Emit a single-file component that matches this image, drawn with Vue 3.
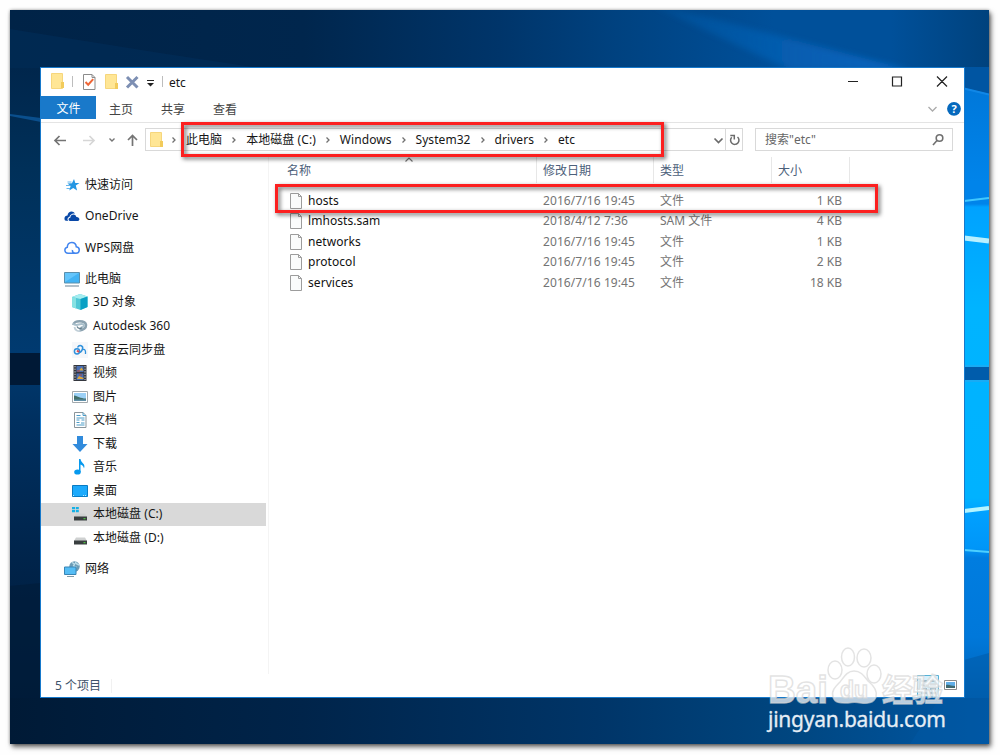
<template>
  <div class="desktop">
    <svg class="wallpaper" viewBox="0 0 979 734" preserveAspectRatio="none" aria-hidden="true">
      <defs>
        <linearGradient id="top" x1="0" x2="1" y1="0" y2="0">
          <stop offset="0" stop-color="#002347" />
          <stop offset="0.3" stop-color="#00264d" />
          <stop offset="0.5" stop-color="#00356a" />
          <stop offset="0.62" stop-color="#004280" />
          <stop offset="0.78" stop-color="#00509a" />
          <stop offset="0.9" stop-color="#00509a" />
          <stop offset="1" stop-color="#00427d" />
        </linearGradient>
        <linearGradient id="beam" x1="0" x2="1" y1="0" y2="0">
          <stop offset="0" stop-color="#0a64b8" stop-opacity="0.3" />
          <stop offset="1" stop-color="#0a6ccb" />
        </linearGradient>
        <linearGradient id="bottom" x1="0" x2="1" y1="0" y2="0">
          <stop offset="0" stop-color="#001a36" />
          <stop offset="0.3" stop-color="#00244a" />
          <stop offset="0.6" stop-color="#003568" />
          <stop offset="0.8" stop-color="#004680" />
          <stop offset="1" stop-color="#0058a6" />
        </linearGradient>
        <linearGradient id="left" x1="0" x2="0" y1="0" y2="1">
          <stop offset="0" stop-color="#00264c" />
          <stop offset="0.16" stop-color="#003059" />
          <stop offset="0.45" stop-color="#003a70" />
          <stop offset="0.56" stop-color="#003060" />
          <stop offset="0.8" stop-color="#002349" />
          <stop offset="1" stop-color="#001a36" />
        </linearGradient>
        <linearGradient id="right" x1="0" x2="0" y1="0" y2="1">
          <stop offset="0" stop-color="#0075d6" />
          <stop offset="0.18" stop-color="#0084ea" />
          <stop offset="0.215" stop-color="#0084ea" />
          <stop offset="0.22" stop-color="#00a2ff" />
          <stop offset="0.38" stop-color="#00b4ff" />
          <stop offset="0.68" stop-color="#00b2ff" />
          <stop offset="0.705" stop-color="#00a0ff" />
          <stop offset="0.76" stop-color="#0096f8" />
          <stop offset="0.775" stop-color="#007de0" />
          <stop offset="0.9" stop-color="#0078da" />
          <stop offset="1" stop-color="#0062b4" />
        </linearGradient>
        <filter id="soft" x="-10%" y="-40%" width="120%" height="180%">
          <feGaussianBlur stdDeviation="3" />
        </filter>
      </defs>
      <rect width="979" height="734" fill="#003060" />
      <rect width="979" height="60" fill="url(#top)" />
      <path d="M640 -6 L700 8 L900 60 L780 60 Z" fill="url(#beam)" opacity="0.8" filter="url(#soft)" />
      <path d="M0 19 L150 43 L250 58 L0 58 Z" fill="#003362" opacity="0.4" />
      <rect y="58" width="31" height="630" fill="url(#left)" />
      <path d="M0 104 L31 108 L31 112 L0 106 Z" fill="#0a4f8d" />
      <rect y="343" width="31" height="32" fill="#001936" />
      <path d="M0 576 L31 573 L31 688 L0 688 Z" fill="#001c3b" opacity="0.7" />
      <rect x="954" y="58" width="25" height="632" fill="url(#right)" />
      <path d="M954 57 L979 57 L979 84 L954 78 Z" fill="#0055a2" />
      <path d="M954 78.500 L979 84.500" stroke="#1087e6" stroke-width="2" />
      <path d="M954 191 L979 188" stroke="#40c8ff" stroke-width="2" />
      <path d="M954 228 L979 231" stroke="#b9f0ff" stroke-width="5" />
      <rect x="954" y="357" width="25" height="13" fill="#005cab" />
      <path d="M954 356 H979 M954 371 H979" stroke="#30a4ea" />
      <path d="M954 501 L979 498" stroke="#b4f4ff" stroke-width="4" />
      <path d="M954 540 L979 542" stroke="#4ccfff" stroke-width="2" />
      <rect y="688" width="979" height="46" fill="url(#bottom)" />
      <path d="M954 650 L979 643 V734 H900 Z" fill="#0058a4" opacity="0.5" />
    </svg>

    <main class="window">
      <header class="titlebar">
        <svg class="quick" viewBox="0 0 150 28" aria-hidden="true">
          <g fill="#ffe695" stroke="#f6d67c">
            <path d="M10.500 5.500h11v15h-11z" />
            <path d="M64.500 6.500h11v14h-11z" />
          </g>
          <path d="M20 14h3v6h-3zM74 15h3v6h-3z" fill="#f2cb5b" />
          <path d="M31.500 8v11M121.500 8v11" stroke="#bdbdbd" />
          <path d="M42.500 6.500h8.500l3 3v12h-11.500z" fill="#fff" stroke="#8b8b8b" />
          <path d="M51 6.500v3h3" fill="none" stroke="#8b8b8b" />
          <path d="M44.500 14l2.700 2.700 5-5.500" fill="none" stroke="#ee6636" stroke-width="2" />
          <path d="M86 9l10.500 10.500M96.500 9l-10.500 10.500" stroke="#7d8fb3" stroke-width="3" />
          <path d="M106 12.500h7" stroke="#222" />
          <path d="M106 15h7l-3.500 3.500z" fill="#222" />
        </svg>
        <span class="title">etc</span>
        <svg class="controls" viewBox="0 0 125 28" fill="none" stroke="#222" stroke-width="1.200">
          <path d="M8 13.500h10M52.500 9h9v9h-9zM97 8.500l10 10M107 8.500l-10 10" />
        </svg>
      </header>

      <nav class="tabs">
        <span class="tab active">文件</span>
        <span v-for="tab in tabs" :key="tab" class="tab">{{ tab }}</span>
        <svg class="help" viewBox="0 0 40 22">
          <path d="M7.500 11l4 4 4-4" fill="none" stroke="#aaa" stroke-width="1.300" />
          <circle cx="33" cy="12.800" r="6.900" fill="#0669bd" />
          <text x="33" y="16.800" text-anchor="middle">?</text>
        </svg>
      </nav>

      <div class="toolbar">
        <svg class="history" viewBox="0 0 104 34" fill="none" stroke="#747474" stroke-width="1.700">
          <path d="M25 17.500H14M18.500 13L14 17.500l4.500 4.500" />
          <path d="M42 17.500h11M48.500 13l4.500 4.500-4.500 4.500" stroke="#d6d6d6" />
          <path d="M68.500 15.500l2.500 2.500 2.500-2.500" stroke-width="1.400" />
          <path d="M91.500 23V12.500M87 17l4.500-4.500L96 17" />
        </svg>
        <div class="address">
          <svg class="crumb-folder" viewBox="0 0 40 22">
            <path d="M4.500 3.500h11v14h-11z" fill="#ffe695" stroke="#f6d67c" />
            <path d="M14 12h3v6h-3z" fill="#f2cb5b" />
            <path d="M26.500 8.500l2.500 2.500-2.500 2.500" fill="none" stroke="#707070" stroke-width="1.300" />
          </svg>
          <template v-for="(crumb, i) in crumbs" :key="crumb">
            <svg v-if="i" class="separator" viewBox="0 0 24 22">
              <path d="M10.500 8.500l2.500 2.500-2.500 2.500" fill="none" stroke="#707070" stroke-width="1.300" />
            </svg>
            <span class="crumb">{{ crumb }}</span>
          </template>
          <svg class="refresh" viewBox="0 0 32 22" fill="none" stroke="#6b6b6b">
            <path d="M4.500 9.500l4 4 4-4" stroke-width="1.700" />
            <path d="M15.500 0v22" stroke="#d9d9d9" />
            <path d="M21.700 8.300a4.200 4.200 0 1 0 5.800-.3M20.300 6.500h4v4" stroke-width="1.500" />
          </svg>
        </div>
        <div class="search">
          <span>搜索"etc"</span>
          <svg viewBox="0 0 14 14" fill="none" stroke="#707070" stroke-width="1.600">
            <circle cx="8.500" cy="5" r="3.300" />
            <path d="M6 7.500L2 12" />
          </svg>
        </div>
      </div>

      <div class="content">
        <aside class="sidebar">
          <div
            v-for="item in places"
            :key="item.name"
            class="place"
            :class="{ nested: item.nested, grouped: item.grouped, selected: item.selected }"
          >
            <svg class="place-icon" viewBox="0 0 16 16" aria-hidden="true">
              <g v-if="item.icon === 'star'">
                <path d="M10 2l1.300 4h4.200l-3.700 2.600 1.300 5-3.900-2.700-3.900 2.700 1.300-4.700L3.500 6.500l4.400-.3z" fill="#2496e3" />
                <path d="M3.500 5h4M2 8.500h4M2.500 11.500h3.500" stroke="#68b7ec" />
              </g>
              <g v-else-if="item.icon === 'onedrive'">
                <path d="M1 12.500c-1.500-3 .3-5 2.500-5C4 3 9 2 11 5.500 7 5 5.500 8 5.500 9 3.500 9.500 3 11 4 13z" fill="#0948a7" />
                <path d="M6 13c-2.200-.4-1.700-3.300.3-3.300C6.500 6.500 11 5 12.400 9c3-.2 4.100 3.300 1.600 4z" fill="#0948a7" />
              </g>
              <g v-else-if="item.icon === 'wps'" fill="none" stroke="#4285ef" stroke-width="1.500">
                <path d="M10.500 13.200H4C.2 13.200-.2 8 3.300 7.300 3.500 1 11.700 1 12.300 6.800c4.400.9 3.500 6.400-.3 6.400-3 0-3.800-1.500-3.500-3.200" />
              </g>
              <g v-else-if="item.icon === 'computer'">
                <path d="M.5 1.500h15v10.500H.5z" fill="#42b3f4" stroke="#5a8fac" />
                <path d="M1 2h14L1 11z" fill="#7bd1ff" opacity=".6" />
                <path d="M1 15h14" stroke="#8198a7" stroke-width="1.200" />
              </g>
              <g v-else-if="item.icon === 'cube'">
                <path d="M0 3l8-3 7.500 2.500v10.500L8.500 16 0 13z" fill="#4fc8d5" />
                <path d="M0 3l8-3 7.500 2.500-7 2.500z" fill="#a5edf0" />
                <path d="M8.500 5l7-2.500v10.500l-7 3z" fill="#0aa0c4" />
                <path d="M0 3l4 1v10.500L0 13z" fill="#86e2e3" />
              </g>
              <g v-else-if="item.icon === 'autodesk'" fill="none">
                <path d="M1.500 7c0-5 12-5 12.500 0 .2 3-3 5-6.500 5.500" stroke="#8ba2b0" stroke-width="2.600" />
                <path d="M1 5.500c3 4 7-1 10.500 1 1.500 1.500-1.500 3.500-3 2.500" stroke="#a9bfcb" stroke-width="2" />
                <path d="M2.500 9c.5 3.500 3.500 4.500 6 4" stroke="#c0cfd8" stroke-width="1.800" />
                <path d="M5 8.500c1 2 3 2.300 5 1.300" stroke="#637d8c" stroke-width="1.300" />
              </g>
              <g v-else-if="item.icon === 'baidu'" fill="none">
                <path d="M0 0h16v16H0z" fill="#f5f7fa" />
                <circle cx="5" cy="9.300" r="2.600" stroke="#2f91dc" stroke-width="1.500" />
                <path d="M5.500 5.500c2-3.500 6-1.500 5 1.500-.6 2-2 3.500-3.500 3.500" stroke="#2f91dc" stroke-width="1.500" />
                <path d="M11 7.500c2-.5 2.800 1 2.500 4.500" stroke="#2f91dc" stroke-width="1.300" />
                <path d="M5 8.500l2 1.500" stroke="#dc4950" stroke-width="2" />
              </g>
              <g v-else-if="item.icon === 'video'">
                <path d="M1.500 0h13v16h-13z" fill="#34373e" />
                <path d="M3 1v14M13 1v14" stroke="#d3d7dc" stroke-dasharray="1.300 1.300" />
                <path d="M4.500 1h7v6h-7zM4.500 8.500h7V15h-7z" fill="#4a70b4" />
                <path d="M7 5.500l2.500-3 2 3zM5 14l2-3 4.500 2v1z" fill="#dda83b" />
                <path d="M5 6h3M7 10h3" stroke="#b74434" />
              </g>
              <g v-else-if="item.icon === 'picture'">
                <path d="M.5 2.500h15v11H.5z" fill="#fff" stroke="#a2a9ad" />
                <path d="M2 4h12v8H2z" fill="#9bd0f6" />
                <path d="M2 6.500c4 .5 6 3 12 3V12H2z" fill="#416f6a" />
                <path d="M2 10.500h12V12H2z" fill="#5f8fa8" />
              </g>
              <g v-else-if="item.icon === 'document'">
                <path d="M2.500.5h8.500l3 3v12H2.500z" fill="#fff" stroke="#8a959b" />
                <path d="M11 .5v3h3M4.500 3.500h4M4.500 6h8M4.500 8h3M9.500 8h3M4.500 10.500h3M9 11h3.500M4.500 13h8" fill="none" stroke="#4a9cc8" />
              </g>
              <path v-else-if="item.icon === 'download'" d="M5 0h6v8h4.500L8 16 .5 8H5z" fill="#318bdc" />
              <g v-else-if="item.icon === 'music'">
                <path d="M7 0h1.500c.3 4 5.500 4.500 3.500 9.500-.3-2.500-2-3.500-3.500-4V13H7z" fill="#0699ee" />
                <ellipse cx="5.500" cy="13" rx="3.300" ry="2.600" fill="#0699ee" />
              </g>
              <g v-else-if="item.icon === 'desktop'">
                <path d="M.5 2.500h15v11H.5z" fill="#1caafc" stroke="#087bc3" />
                <path d="M1 12.500h2M11 12.500h3" stroke="#bde6ff" stroke-dasharray="1 1" />
              </g>
              <g v-else-if="item.icon === 'drive' || item.icon === 'system'">
                <path v-if="item.icon === 'system'" d="M0 1h3v2.300H0zM3.800 1h3v2.300h-3zM0 4h3v2.300H0zM3.800 4h3v2.300h-3z" fill="#15b0e5" />
                <path d="M4 7.500h9l2 3.500H2z" fill="#cfd1d1" />
                <path d="M2 10.500h13v4H2z" fill="#393e3f" />
                <path d="M11.500 12.700h2" stroke="#52dd42" />
              </g>
              <g v-else>
                <circle cx="10.500" cy="5.500" r="5.200" fill="#6c9cb6" />
                <path d="M8 1.500l2.500 1.500-1 2 3 1.500M11.500.5l.5 2 3 1.500" fill="none" stroke="#c0dfea" stroke-width="1.400" />
                <path d="M.5 6H12v7.500H.5z" fill="#55bdf5" stroke="#3885b5" />
                <path d="M3 15.500h7" stroke="#829aa5" />
              </g>
            </svg>
            <span>{{ item.name }}</span>
          </div>
        </aside>

        <section class="files">
          <div class="file-head">
            <span class="sorted">
              名称
              <svg class="sort" viewBox="0 0 10 6"><path d="M1.500 4.500L5 1l3.500 3.500" fill="none" stroke="#777" stroke-width="1.200" /></svg>
            </span>
            <span>修改日期</span>
            <span>类型</span>
            <span>大小</span>
          </div>
          <div v-for="file in files" :key="file.name" class="file-row">
            <span class="file-name">
              <svg class="file-icon" viewBox="0 0 13 16">
                <path d="M.5.500h8l3 3v12H.5z" fill="#fafbfb" stroke="#9c9c9c" />
                <path d="M8.500.5v3h3" fill="none" stroke="#9c9c9c" />
              </svg>
              {{ file.name }}
            </span>
            <span class="date">{{ file.date }}</span>
            <span>{{ file.type }}</span>
            <span class="size">{{ file.size }}</span>
          </div>
        </section>
      </div>

      <footer class="status">
        <span class="count">5 个项目</span>
        <svg class="views" viewBox="0 0 42 22">
          <path d="M1.500.5h21v21h-21z" fill="#d8f0fb" stroke="#57b2d6" />
          <path d="M5 6h6M14 6h6M5 10h6M14 10h6M5 14h6M14 14h6M5 18h6M14 18h6" stroke="#68899a" />
          <path d="M28.500 5.500h12v9h-12z" fill="#fff" stroke="#8b8b8b" />
          <path d="M30 7h9v6h-9z" fill="#62afe8" />
          <path d="M30 10c3-1 5 1 9 1v2h-9z" fill="#3f6970" />
        </svg>
      </footer>
    </main>

    <div class="mark mark-path"></div>
    <div class="mark mark-file"></div>

    <svg class="watermark" viewBox="0 0 190 95">
      <g class="logo">
        <text x="3" y="56" font-size="38" textLength="60" lengthAdjust="spacingAndGlyphs">Bai</text>
        <ellipse cx="70" cy="23" rx="7" ry="9" />
        <ellipse cx="83" cy="10" rx="6.500" ry="9" />
        <ellipse cx="99" cy="11" rx="7" ry="9" />
        <ellipse cx="109" cy="27" rx="7" ry="9" />
        <path d="M89 24c-7 0-10 6-14 11-5 5-9 9-7 15 2 7 9 6 15 6 5-1 8-1 13 0 6 1 13 0 15-6 2-7-3-12-8-16-4-5-7-10-14-10z" />
        <text x="75" y="51" font-size="23" textLength="28" lengthAdjust="spacingAndGlyphs">du</text>
        <text class="cjk" x="117" y="54" font-size="31" textLength="61">经验</text>
      </g>
      <text class="url" x="3" y="80" textLength="178">jingyan.baidu.com</text>
    </svg>
  </div>
</template>

<script setup>
const tabs = ['主页', '共享', '查看']
const crumbs = ['此电脑', '本地磁盘 (C:)', 'Windows', 'System32', 'drivers', 'etc']

const places = [
  { name: '快速访问', icon: 'star' },
  { name: 'OneDrive', icon: 'onedrive', grouped: true },
  { name: 'WPS网盘', icon: 'wps', grouped: true },
  { name: '此电脑', icon: 'computer', grouped: true },
  { name: '3D 对象', icon: 'cube', nested: true },
  { name: 'Autodesk 360', icon: 'autodesk', nested: true },
  { name: '百度云同步盘', icon: 'baidu', nested: true },
  { name: '视频', icon: 'video', nested: true },
  { name: '图片', icon: 'picture', nested: true },
  { name: '文档', icon: 'document', nested: true },
  { name: '下载', icon: 'download', nested: true },
  { name: '音乐', icon: 'music', nested: true },
  { name: '桌面', icon: 'desktop', nested: true },
  { name: '本地磁盘 (C:)', icon: 'system', nested: true, selected: true },
  { name: '本地磁盘 (D:)', icon: 'drive', nested: true },
  { name: '网络', icon: 'network', grouped: true },
]

const files = [
  { name: 'hosts', date: '2016/7/16 19:45', type: '文件', size: '1 KB' },
  { name: 'lmhosts.sam', date: '2018/4/12 7:36', type: 'SAM 文件', size: '4 KB' },
  { name: 'networks', date: '2016/7/16 19:45', type: '文件', size: '1 KB' },
  { name: 'protocol', date: '2016/7/16 19:45', type: '文件', size: '2 KB' },
  { name: 'services', date: '2016/7/16 19:45', type: '文件', size: '18 KB' },
]
</script>

<style>
body {
  background: #fefefe;
}
</style>

<style scoped>
.desktop {
  position: relative;
  box-sizing: border-box;
  width: 979px;
  height: 734px;
  margin: 10px;
  padding: 57px 24px 46px 30px;
  box-shadow: 2px 3px 5px #0009, 0 0 3px #0005;
  font: 12px/18px "Noto Sans", "Noto Sans CJK SC", sans-serif;
  color: #161616;
}

.wallpaper {
  position: absolute;
  inset: 0;
  width: 100%;
  height: 100%;
}

.window {
  position: relative;
  display: flex;
  flex-direction: column;
  box-sizing: border-box;
  height: 631px;
  border: 1px solid #1779cb;
  background: #fff;
}

svg {
  display: block;
  flex: none;
}

.titlebar,
.tabs,
.toolbar,
.address,
.search {
  display: flex;
  align-items: center;
}

.titlebar {
  height: 28px;
}

.quick {
  width: 150px;
  height: 28px;
  margin-right: -22px;
}

.title {
  padding-top: 1px;
}

.controls {
  width: 125px;
  height: 28px;
  margin-left: auto;
  margin-right: -1px;
}

.tabs {
  height: 26px;
  border-bottom: 1px solid #e4e4e4;
  align-items: flex-start;
  color: #444;
}

.tab {
  width: 52px;
  padding-top: 5px;
  text-align: center;
}

.tab.active {
  width: 55px;
  height: 18px;
  margin-right: -1px;
  background: #1979ca;
  color: #fff;
  padding-top: 4px;
  padding-bottom: 1px;
}

.help {
  width: 40px;
  height: 22px;
  margin-left: auto;
  margin-right: 3px;
}

.help text {
  fill: #fff;
  font-size: 11px;
  font-weight: 700;
}

.toolbar {
  height: 34px;
}

.history {
  width: 104px;
  height: 34px;
}

.address,
.search {
  box-sizing: border-box;
  height: 23px;
  border: 1px solid #d9d9d9;
}

.address {
  width: 598px;
}

.crumb-folder {
  width: 40px;
  height: 22px;
}

.crumb {
  white-space: nowrap;
  letter-spacing: 0.06px;
}

.separator {
  width: 24px;
  height: 22px;
}

.refresh {
  width: 32px;
  height: 22px;
  margin-left: auto;
}

.search {
  width: 198px;
  margin-left: 12px;
  padding: 0 7px 0 9px;
  justify-content: space-between;
  color: #666;
}

.search svg {
  width: 14px;
  height: 14px;
}

.content {
  display: flex;
  height: 518px;
}

.sidebar {
  width: 228px;
  padding-top: 16px;
  box-sizing: border-box;
  border-right: 1px solid #f4f4f4;
}

.place {
  display: flex;
  align-items: center;
  gap: 5px;
  height: 23.55px;
  margin-right: 2px;
  padding-left: 23px;
  white-space: nowrap;
  letter-spacing: 0.04px;
}

.place.nested {
  padding-left: 31px;
}

.place.grouped {
  margin-top: 7.85px;
}

.place.selected {
  background: #d9d9d9;
}

.place-icon {
  width: 16px;
  height: 16px;
}

.files {
  flex: 1;
}

.file-head,
.file-row {
  display: grid;
  grid-template-columns: 268px 117px 118px 78px;
}

.file-head {
  height: 26px;
  margin-bottom: 7.4px;
  color: #4c607a;
}

.file-head span {
  padding: 5px 0 3px 6px;
  border-right: 1px solid #e7e7e7;
}

.file-head .sorted {
  position: relative;
  padding-left: 18px;
}

.sort {
  position: absolute;
  top: 0;
  left: 135px;
  width: 10px;
  height: 6px;
}

.file-row {
  height: 20.6px;
  align-items: center;
  color: #747474;
}

.file-row > span {
  padding-left: 6px;
}

.file-row > .date {
  letter-spacing: 0.08px;
}

.file-row > .file-name {
  display: flex;
  align-items: center;
  gap: 5px;
  padding-left: 21px;
  letter-spacing: 0.06px;
  color: #111;
}

.file-icon {
  width: 13px;
  height: 16px;
}

.size {
  padding-right: 8px;
  text-align: right;
}

.status {
  display: flex;
  align-items: center;
  justify-content: space-between;
  height: 23px;
  padding: 0 6px 0 14px;
  color: #3e526a;
}

.count {
  padding-right: 10px;
  border-right: 1px solid #f1f1f1;
  line-height: 14px;
}

.views {
  width: 42px;
  height: 22px;
}

.mark {
  position: absolute;
  box-sizing: border-box;
  border: 3px solid #fc2020;
  filter: drop-shadow(2px 2px 2px #0009);
}

.mark-path {
  top: 112px;
  left: 171px;
  width: 483px;
  height: 35px;
}

.mark-file {
  top: 174px;
  left: 265px;
  width: 603px;
  height: 29px;
}

.watermark {
  position: absolute;
  top: 637px;
  left: 755px;
  width: 190px;
  height: 95px;
}

.logo {
  fill: #ffffffb8;
  stroke: #d5d5d5a8;
  stroke-width: 1.5;
  font-family: "Liberation Sans", sans-serif;
  font-weight: 700;
}

.logo .cjk {
  font-family: "Noto Sans CJK SC", sans-serif;
}

.url {
  fill: #e5edf5;
  font-size: 21px;
  stroke: #e5edf5;
  stroke-width: 0.3;
}
</style>
